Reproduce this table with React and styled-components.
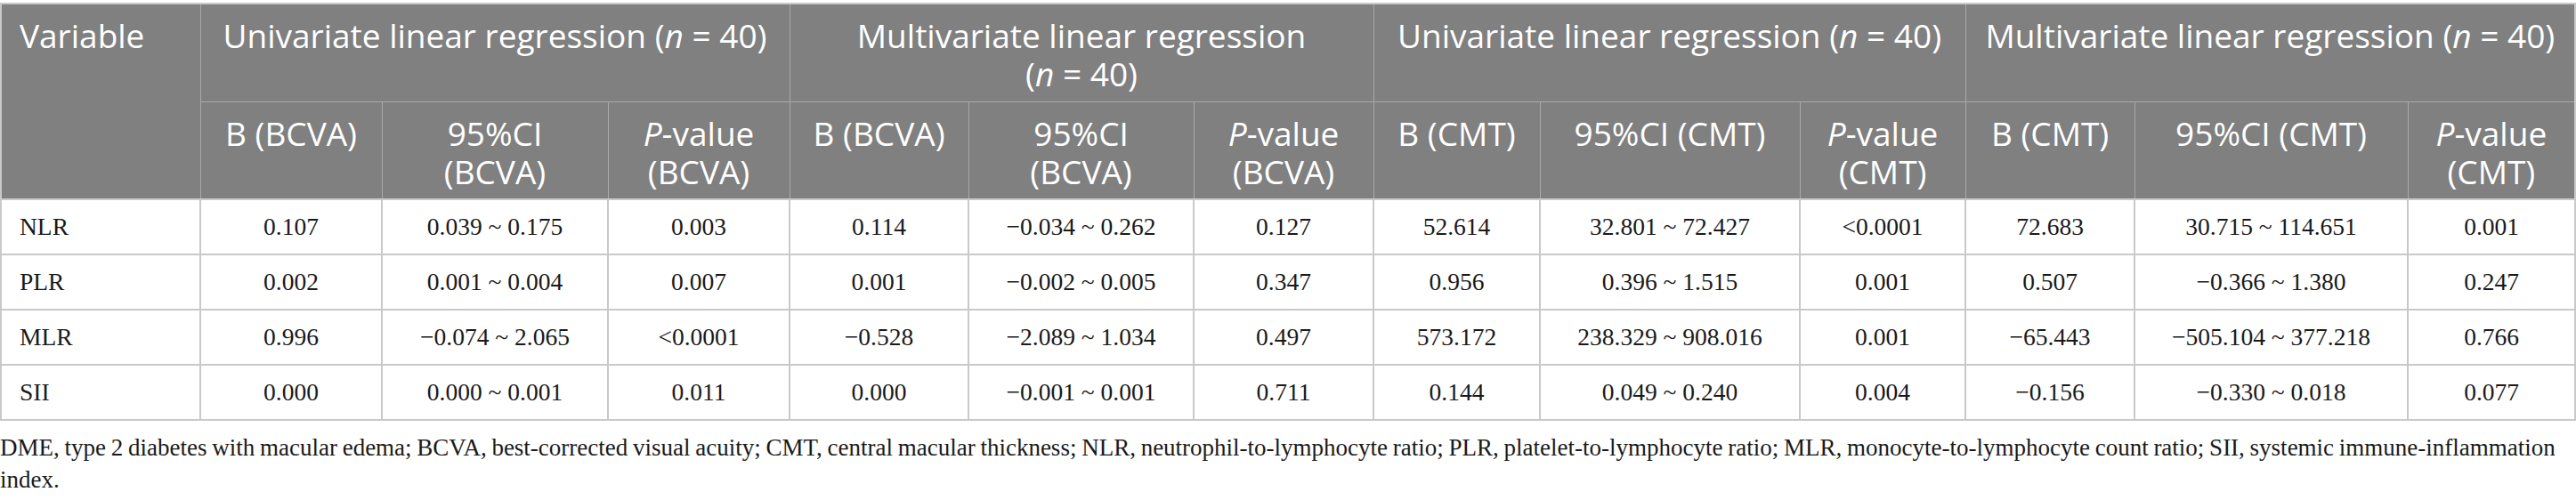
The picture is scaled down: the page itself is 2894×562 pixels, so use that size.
import React from 'react'
import styled, { createGlobalStyle } from 'styled-components'

const GlobalStyle = createGlobalStyle`
  html, body {
    margin: 0;
    padding: 0;
    background: #ffffff;
  }
`

const Page = styled.div`
  width: 2894px;
  padding-top: 3px;
`

const Table = styled.table`
  width: 2893px;
  table-layout: fixed;
  border-collapse: collapse;
  border: 2px solid #c9c9c9;
`

const HeadRow = styled.tr`
  height: 110px;
`

const HeadCell = styled.th`
  background: #7f807f;
  color: #ffffff;
  font-family: 'Open Sans', 'Liberation Sans', sans-serif;
  font-weight: 400;
  font-size: 37px;
  line-height: 43px;
  text-align: ${({ $align }) => $align || 'center'};
  vertical-align: top;
  padding: 13px 20px 0;
  border: 1px solid #a9a9a9;

  i {
    font-style: italic;
  }
`

const NoWrap = styled.span`
  white-space: nowrap;
`

const BodyRow = styled.tr`
  height: 62px;
`

const BodyCell = styled.td`
  font-family: 'Liberation Serif', 'Times New Roman', serif;
  font-size: 27.5px;
  color: #1a1a1a;
  text-align: ${({ $align }) => $align || 'center'};
  vertical-align: middle;
  padding: 0 20px;
  border: 2px solid #c9c9c9;
  white-space: nowrap;
`

const Footnote = styled.p`
  margin: 12px 0 0;
  font-family: 'Liberation Serif', 'Times New Roman', serif;
  font-size: 27px;
  word-spacing: -1px;
  line-height: 36px;
  color: #1a1a1a;
`

const widths = [224, 204, 254, 204, 201, 253, 202, 187, 292, 186, 190, 307, 188]

const groups = [
  ['Univariate linear regression', 'BCVA'],
  ['Multivariate linear regression', 'BCVA'],
  ['Univariate linear regression', 'CMT'],
  ['Multivariate linear regression', 'CMT'],
]

const rows = [
  ['NLR', '0.107', '0.039 ~ 0.175', '0.003', '0.114', '−0.034 ~ 0.262', '0.127', '52.614', '32.801 ~ 72.427', '<0.0001', '72.683', '30.715 ~ 114.651', '0.001'],
  ['PLR', '0.002', '0.001 ~ 0.004', '0.007', '0.001', '−0.002 ~ 0.005', '0.347', '0.956', '0.396 ~ 1.515', '0.001', '0.507', '−0.366 ~ 1.380', '0.247'],
  ['MLR', '0.996', '−0.074 ~ 2.065', '<0.0001', '−0.528', '−2.089 ~ 1.034', '0.497', '573.172', '238.329 ~ 908.016', '0.001', '−65.443', '−505.104 ~ 377.218', '0.766'],
  ['SII', '0.000', '0.000 ~ 0.001', '0.011', '0.000', '−0.001 ~ 0.001', '0.711', '0.144', '0.049 ~ 0.240', '0.004', '−0.156', '−0.330 ~ 0.018', '0.077'],
]

const App = () => {
  return (
    <Page>
      <GlobalStyle />
      <Table>
        <colgroup>
          {widths.map((w, i) => (
            <col key={i} style={{ width: w }} />
          ))}
        </colgroup>
        <thead>
          <HeadRow>
            <HeadCell rowSpan={2} $align="left">Variable</HeadCell>
            {groups.map(([title], i) => (
              <HeadCell key={i} colSpan={3}>
                {title}{' '}
                <NoWrap>
                  (<i>n</i> = 40)
                </NoWrap>
              </HeadCell>
            ))}
          </HeadRow>
          <HeadRow>
            {groups.map(([, unit], i) => (
              <React.Fragment key={i}>
                <HeadCell>B ({unit})</HeadCell>
                <HeadCell>95%CI ({unit})</HeadCell>
                <HeadCell>
                  <i>P</i>-value ({unit})
                </HeadCell>
              </React.Fragment>
            ))}
          </HeadRow>
        </thead>
        <tbody>
          {rows.map((row) => (
            <BodyRow key={row[0]}>
              {row.map((cell, i) => (
                <BodyCell key={i} $align={i === 0 ? 'left' : 'center'}>
                  {cell}
                </BodyCell>
              ))}
            </BodyRow>
          ))}
        </tbody>
      </Table>
      <Footnote>
        DME, type 2 diabetes with macular edema; BCVA, best-corrected visual acuity; CMT, central macular thickness; NLR,
        neutrophil-to-lymphocyte ratio; PLR, platelet-to-lymphocyte ratio; MLR, monocyte-to-lymphocyte count ratio; SII,
        systemic immune-inflammation index.
      </Footnote>
    </Page>
  )
}

export default App
